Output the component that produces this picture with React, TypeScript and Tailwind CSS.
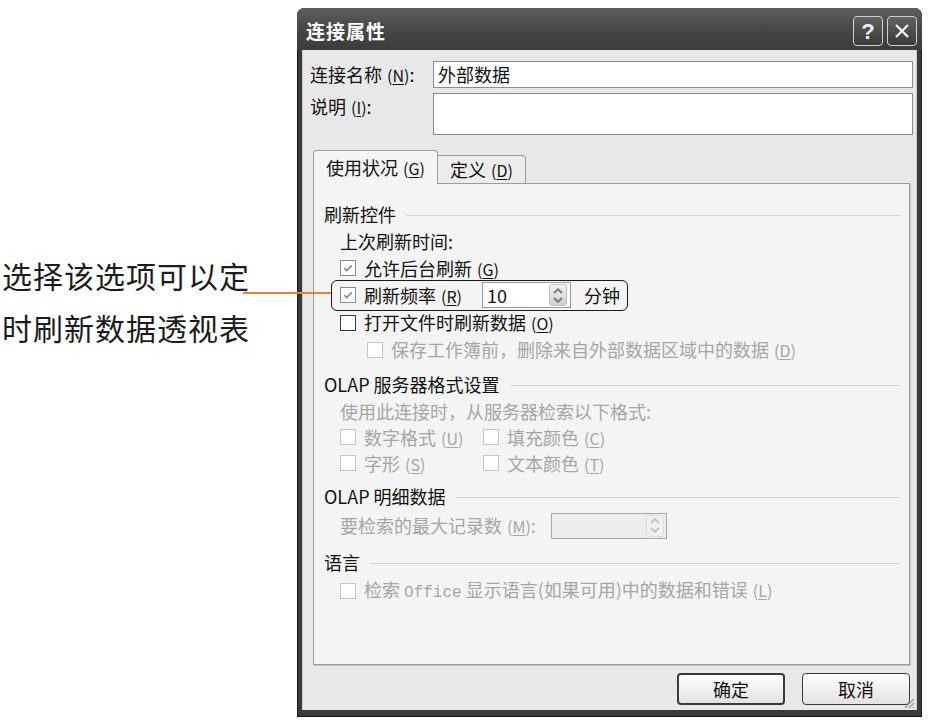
import React from 'react';

const Acc = ({ k }: { k: string }) => (
  <span className="text-[16px] ml-[5px]">
    (<span className="underline underline-offset-2">{k}</span>)
  </span>
);

const Check = ({ checked, disabled }: { checked?: boolean; disabled?: boolean }) => (
  <span
    className={`w-[16px] h-[16px] shrink-0 bg-white border flex items-center justify-center ${
      disabled ? 'border-[#c6c6c6]' : checked ? 'border-[#8a8a8a]' : 'border-[#3a3a3a]'
    }`}
  >
    {checked && (
      <svg viewBox="0 0 16 16" className="w-[12px] h-[12px]">
        <path d="M3 8.2 L6.4 11.4 L13 4.4" fill="none" stroke="#8a8a8a" strokeWidth="2.4" />
      </svg>
    )}
  </span>
);

const Spin = ({ disabled }: { disabled?: boolean }) => {
  const c = disabled ? '#c4c4c4' : '#7c7c7c';
  return (
    <span
      className={`w-[18px] h-[22px] rounded-[3px] border flex flex-col items-center justify-center gap-[3px] ${
        disabled ? 'border-[#dcdcdc] bg-[#f0f0f0]' : 'border-[#c2c2c2] bg-linear-to-b from-[#f2f2f2] to-[#cfcfcf]'
      }`}
    >
      <svg width="10" height="6" viewBox="0 0 10 6">
        <path d="M1 5 L5 1.2 L9 5" fill="none" stroke={c} strokeWidth="2" />
      </svg>
      <svg width="10" height="6" viewBox="0 0 10 6">
        <path d="M1 1 L5 4.8 L9 1" fill="none" stroke={c} strokeWidth="2" />
      </svg>
    </span>
  );
};

const Group = ({ title, className }: { title: React.ReactNode; className?: string }) => (
  <div className={`h-[27px] flex items-center ${className ?? ''}`}>
    <span className="whitespace-nowrap">{title}</span>
    <span className="flex-1 h-px bg-[#d4d4d4] ml-[10px] mt-[2px]" />
  </div>
);

const Row = ({ children, className }: { children: React.ReactNode; className?: string }) => (
  <div className={`flex items-center whitespace-nowrap ${className ?? 'h-[27px]'}`}>{children}</div>
);

const DialogButton = ({ label, primary }: { label: string; primary?: boolean }) => (
  <button
    className={`w-[108px] h-[32px] rounded-[4px] bg-linear-to-b from-[#ffffff] to-[#e2e2e2] text-[18px] text-[#111] flex items-center justify-center ${
      primary ? 'border-2 border-[#3a3a3a]' : 'border border-[#3a3a3a]'
    }`}
  >
    {label}
  </button>
);

export default function App() {
  return (
    <div className="w-[932px] h-[722px] bg-white relative flex overflow-hidden font-['Noto_Sans_CJK_SC',sans-serif]">
      {/* annotation */}
      <div className="w-[297px] shrink-0 pt-[249px] pl-[2px] text-[30px] leading-[52px] text-[#1c1c1c] tracking-[1px]">
        <div>选择该选项可以定</div>
        <div>时刷新数据透视表</div>
      </div>

      {/* dialog window */}
      <div className="w-[625px] h-[709px] mt-[8px] shrink-0 flex flex-col rounded-t-[8px] bg-[#3a3a3a] shadow-[inset_1px_0_0_#1c1c1c,inset_-1px_0_0_#1c1c1c,inset_0_-1px_0_#161616]">
        <div className="h-[42px] pt-[4px] pl-[9px] pr-[5px] flex items-center rounded-t-[8px] bg-linear-to-b from-[#5e5e5e] via-[#474747] to-[#3c3c3c]">
          <span className="text-white font-bold text-[19px] tracking-[1px]">连接属性</span>
          <div className="ml-auto flex gap-[4px]">
            <span className="w-[30px] h-[30px] rounded-[4px] border-[1.5px] border-[#d0d0d0] bg-linear-to-b from-[#626262] to-[#3a3a3a] flex items-center justify-center text-[#f0f0f0] font-bold text-[22px] font-['Liberation_Sans',sans-serif]">
              ?
            </span>
            <span className="w-[30px] h-[30px] rounded-[4px] border-[1.5px] border-[#d0d0d0] bg-linear-to-b from-[#626262] to-[#3a3a3a] flex items-center justify-center">
              <svg width="16" height="16" viewBox="0 0 16 16">
                <path d="M2 2 L14 14 M14 2 L2 14" stroke="#f0f0f0" strokeWidth="2.4" />
              </svg>
            </span>
          </div>
        </div>

        <div className="relative mx-[5px] mb-[7px] flex-1 bg-[#e8e8e8] border-l border-r border-[#cfcfcf] pt-[11px] pl-[7px] pr-[3px] flex flex-col text-[18px] text-[#111]">
          <div className="h-[27px] flex items-center">
            <span className="w-[123px] shrink-0 whitespace-nowrap">
              连接名称<Acc k="N" />:
            </span>
            <div className="flex-1 h-full bg-white border border-[#8c8c8c] flex items-center px-[4px]">外部数据</div>
          </div>
          <div className="mt-[5px] h-[42px] flex">
            <span className="w-[123px] shrink-0 whitespace-nowrap">
              说明<Acc k="I" />:
            </span>
            <div className="flex-1 h-full bg-white border border-[#8c8c8c]" />
          </div>

          <div className="mt-[15px] ml-[3px] flex items-end h-[34px] relative z-10">
            <div className="w-[125px] h-[34px] bg-[#f4f4f4] border border-b-0 border-[#9c9c9c] rounded-t-[4px] flex items-center justify-center whitespace-nowrap">
              使用状况<Acc k="G" />
            </div>
            <div className="w-[88px] h-[29px] bg-[#ececec] border border-l-0 border-[#9c9c9c] rounded-tr-[4px] flex items-center justify-center whitespace-nowrap">
              定义<Acc k="D" />
            </div>
          </div>

          <div className="-mt-px ml-[3px] mr-[3px] h-[482px] bg-[#f4f4f4] border border-[#9c9c9c] shadow-[1px_1px_0_#c4c4c4] pl-[10px] pr-[9px] pt-[17px] flex flex-col">
            <Group title="刷新控件" />
            <div className="pl-[16px] flex flex-col">
              <Row>上次刷新时间:</Row>
              <Row className="h-[26px]">
                <Check checked />
                <span className="ml-[8px]">
                  允许后台刷新<Acc k="G" />
                </span>
              </Row>
              <Row className="h-[28px]">
                <Check checked />
                <span className="ml-[8px] w-[118px]">
                  刷新频率<Acc k="R" />
                </span>
                <div className="w-[89px] h-[26px] bg-white border border-[#9a9a9a] flex items-center pl-[4px] pr-[3px]">
                  <span className="flex-1">10</span>
                  <Spin />
                </div>
                <span className="ml-[13px]">分钟</span>
              </Row>
              <Row>
                <Check />
                <span className="ml-[8px]">
                  打开文件时刷新数据<Acc k="O" />
                </span>
              </Row>
              <Row className="h-[27px] pl-[27px] text-[#a6a6a6]">
                <Check disabled />
                <span className="ml-[8px]">
                  保存工作簿前，删除来自外部数据区域中的数据<Acc k="D" />
                </span>
              </Row>
            </div>

            <Group className="mt-[8px]" title="OLAP 服务器格式设置" />
            <div className="pl-[16px] flex flex-col text-[#a6a6a6]">
              <Row className="h-[26px]">使用此连接时，从服务器检索以下格式:</Row>
              <Row className="h-[26px]">
                <Check disabled />
                <span className="ml-[8px] w-[119px]">
                  数字格式<Acc k="U" />
                </span>
                <Check disabled />
                <span className="ml-[8px]">
                  填充颜色<Acc k="C" />
                </span>
              </Row>
              <Row className="h-[26px]">
                <Check disabled />
                <span className="ml-[8px] w-[119px]">
                  字形<Acc k="S" />
                </span>
                <Check disabled />
                <span className="ml-[8px]">
                  文本颜色<Acc k="T" />
                </span>
              </Row>
            </div>

            <Group className="mt-[7px]" title="OLAP 明细数据" />
            <div className="pl-[16px] flex flex-col text-[#a6a6a6]">
              <Row className="h-[27px] mt-[2px]">
                <span className="w-[211px]">
                  要检索的最大记录数<Acc k="M" />:
                </span>
                <div className="w-[116px] h-[26px] bg-[#ececec] border border-[#a8a8a8] flex items-center justify-end pr-[2px]">
                  <Spin disabled />
                </div>
              </Row>
            </div>

            <Group className="mt-[10px]" title="语言" />
            <div className="pl-[16px] flex flex-col text-[#a6a6a6]">
              <Row className="h-[27px] mt-[1px]">
                <Check disabled />
                <span className="ml-[8px]">
                  检索 <span className="font-['Liberation_Mono',monospace] text-[16px]">Office</span> 显示语言(如果可用)中的数据和错误<Acc k="L" />
                </span>
              </Row>
            </div>
          </div>

          <div className="mt-[8px] mr-[3px] flex justify-end gap-[17px]">
            <DialogButton label="确定" primary />
            <DialogButton label="取消" />
          </div>

          <svg className="absolute right-[1px] bottom-[1px]" width="13" height="13" viewBox="0 0 13 13">
            <path d="M12 3 L3 12 M12 7 L7 12 M12 11 L11 12" stroke="#a0a0a0" strokeWidth="1.5" />
          </svg>
        </div>
      </div>

      {/* callout line and highlight */}
      <div className="absolute left-[243px] top-[292px] w-[89px] h-[2px] bg-[#e8822e]" />
      <div className="absolute left-[331px] top-[280px] w-[297px] h-[31px] rounded-[6px] border-[1.5px] border-[#1a1a1a]" />
    </div>
  );
}
